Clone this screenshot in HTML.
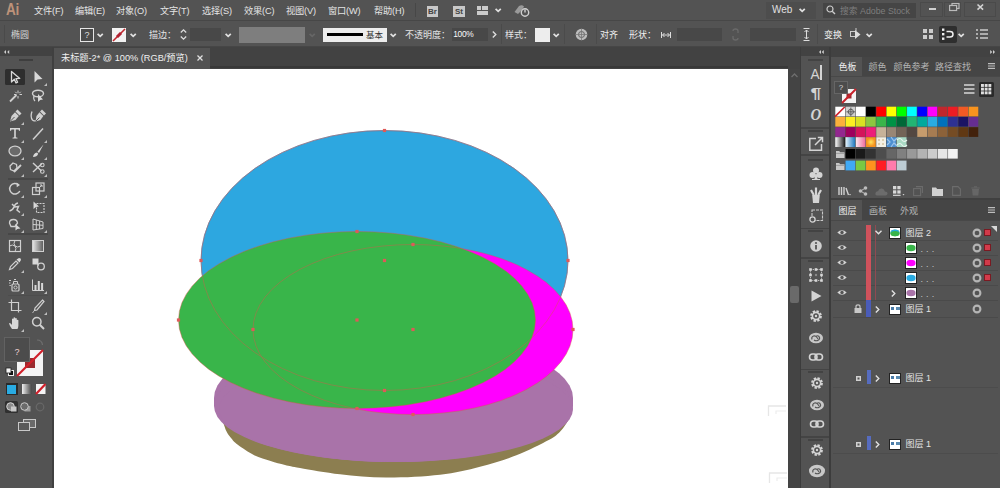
<!DOCTYPE html>
<html lang="zh"><head><meta charset="utf-8"><title>Adobe Illustrator</title><style>
*{margin:0;padding:0;box-sizing:border-box}
html,body{width:1000px;height:488px;overflow:hidden;background:#535353}
body{position:relative;font-family:"Liberation Sans","Noto Sans CJK SC",sans-serif;font-size:9.5px;color:#dcdcdc;line-height:1}
.a{position:absolute}
.t{position:absolute;white-space:nowrap;line-height:12px;height:12px}
svg{position:absolute;overflow:visible}
</style></head><body>
<div class="a" style="left:0px;top:0px;width:1000px;height:20px;background:#535353;"></div>
<div class="a" style="left:0px;top:20px;width:1000px;height:1px;background:#474747;"></div>
<div class="t" style="left:6.4px;top:1.2px;font-weight:bold;font-size:16.5px;line-height:17px;height:17px;color:#bd9279;letter-spacing:-0.3px;transform:scaleX(0.82);transform-origin:0 50%">Ai</div>
<div class="t" style="left:34px;top:4.5px;color:#e4e4e4;font-size:9.2px;letter-spacing:-0.15px">文件(F)</div>
<div class="t" style="left:75px;top:4.5px;color:#e4e4e4;font-size:9.2px;letter-spacing:-0.15px">编辑(E)</div>
<div class="t" style="left:116px;top:4.5px;color:#e4e4e4;font-size:9.2px;letter-spacing:-0.15px">对象(O)</div>
<div class="t" style="left:160px;top:4.5px;color:#e4e4e4;font-size:9.2px;letter-spacing:-0.15px">文字(T)</div>
<div class="t" style="left:202px;top:4.5px;color:#e4e4e4;font-size:9.2px;letter-spacing:-0.15px">选择(S)</div>
<div class="t" style="left:244px;top:4.5px;color:#e4e4e4;font-size:9.2px;letter-spacing:-0.15px">效果(C)</div>
<div class="t" style="left:286px;top:4.5px;color:#e4e4e4;font-size:9.2px;letter-spacing:-0.15px">视图(V)</div>
<div class="t" style="left:328px;top:4.5px;color:#e4e4e4;font-size:9.2px;letter-spacing:-0.15px">窗口(W)</div>
<div class="t" style="left:374px;top:4.5px;color:#e4e4e4;font-size:9.2px;letter-spacing:-0.15px">帮助(H)</div>
<div class="a" style="left:415px;top:3px;width:1px;height:14px;background:#474747;"></div>
<div class="a" style="left:427px;top:5.5px;width:11px;height:11.5px;background:#c8c8c8;"></div>
<div class="t" style="left:428px;top:5.5px;font-size:8px;color:#444;line-height:11px;height:11px;font-weight:bold">Br</div>
<div class="a" style="left:453px;top:5.5px;width:11.5px;height:11.5px;background:#c8c8c8;"></div>
<div class="t" style="left:455px;top:5.5px;font-size:8px;color:#444;line-height:11px;height:11px;font-weight:bold">St</div>
<svg style="left:477px;top:6px;" width="11" height="9" viewBox="0 0 11 9"><rect x="0" y="0" width="4" height="4" fill="#ccc"/><rect x="5" y="0" width="6" height="4" fill="#ccc"/><rect x="0" y="5" width="11" height="4" fill="#ccc"/></svg>
<svg style="left:495.3px;top:8.2px;" width="6.4" height="4.6" viewBox="0 0 6.4 4.6"><path d="M0.6 0.8 L3.2 3.4 L5.8 0.8" fill="none" stroke="#e0e0e0" stroke-width="1.7"/></svg>
<svg style="left:513px;top:4px;" width="17" height="14" viewBox="0 0 17 14"><path d="M1.5 8 L6 2 Q9 0.5 11 2.5 L9 6 L5 10 Z" fill="#9a9a9a"/><circle cx="12" cy="8.5" r="3.7" fill="#535353" stroke="#d0d0d0" stroke-width="1.4"/><path d="M12 5.5 V8.5" stroke="#d0d0d0" stroke-width="1.4"/></svg>
<div class="a" style="left:766px;top:2px;width:50px;height:17px;background:#4d4d4d;"></div>
<div class="t" style="left:772px;top:4px;font-size:10px;color:#e0e0e0">Web</div>
<svg style="left:799.3px;top:7.7px;" width="6.4" height="4.6" viewBox="0 0 6.4 4.6"><path d="M0.6 0.8 L3.2 3.4 L5.8 0.8" fill="none" stroke="#e0e0e0" stroke-width="1.7"/></svg>
<div class="a" style="left:823px;top:3px;width:93px;height:15px;background:#454545;"></div>
<svg style="left:826px;top:5px;" width="11" height="10" viewBox="0 0 11 10"><circle cx="4" cy="4" r="3" fill="none" stroke="#ccc" stroke-width="1.2"/><path d="M6.2 6.2 L9 9" stroke="#ccc" stroke-width="1.4"/></svg>
<div class="t" style="left:840px;top:4.5px;color:#7e7e7e;font-size:8.8px">搜索 Adobe Stock</div>
<div class="a" style="left:920px;top:1.5px;width:23px;height:15px;background:transparent;border:1px solid rgba(0,0,0,0.10)"></div>
<div class="a" style="left:944px;top:1.5px;width:17px;height:15px;background:transparent;border:1px solid rgba(0,0,0,0.10)"></div>
<div class="a" style="left:964px;top:1.5px;width:32px;height:15px;background:transparent;border:1px solid rgba(0,0,0,0.10)"></div>
<div class="a" style="left:928.5px;top:8.3px;width:7.5px;height:1.8px;background:#d0d0d0;"></div>
<svg style="left:948.5px;top:3.3px;" width="11" height="8" viewBox="0 0 11 8"><rect x="3" y="0.5" width="7" height="5" fill="none" stroke="#bbb" stroke-width="1.2"/><rect x="0.6" y="2.5" width="7" height="5" fill="#535353" stroke="#bbb" stroke-width="1.2"/></svg>
<svg style="left:977px;top:3.8px;" width="6.6" height="6.2" viewBox="0 0 6.6 6.2"><path d="M0.5 0.5 L6.1 5.7 M6.1 0.5 L0.5 5.7" stroke="#d4d4d4" stroke-width="1.6"/></svg>
<div class="a" style="left:0px;top:21px;width:1000px;height:25px;background:#535353;"></div>
<div class="a" style="left:0px;top:46px;width:1000px;height:1px;background:#464646;"></div>
<div class="a" style="left:4px;top:25px;width:1px;height:18px;background:#4a4a4a;"></div>
<div class="t" style="left:11px;top:29px;color:#d6d6d6;font-size:9px">椭圆</div>
<div class="a" style="left:80px;top:27.8px;width:14px;height:14px;background:#4a4a4a;border:1.8px solid #e6e6e6"></div>
<div class="t" style="left:80px;top:29px;width:14px;text-align:center;font-size:9px;color:#ddd">?</div>
<svg style="left:97.3px;top:32.7px;" width="6.4" height="4.6" viewBox="0 0 6.4 4.6"><path d="M0.6 0.8 L3.2 3.4 L5.8 0.8" fill="none" stroke="#e0e0e0" stroke-width="1.7"/></svg>
<svg style="left:112px;top:28px;" width="14" height="14" viewBox="0 0 14 14"><rect width="14" height="14" fill="#f2f2f2"/><path d="M1 13 L13 1" stroke="#c1272d" stroke-width="1.6"/><path d="M5 9 L9 5" stroke="#b02030" stroke-width="3"/></svg>
<svg style="left:130.3px;top:32.7px;" width="6.4" height="4.6" viewBox="0 0 6.4 4.6"><path d="M0.6 0.8 L3.2 3.4 L5.8 0.8" fill="none" stroke="#e0e0e0" stroke-width="1.7"/></svg>
<div class="t" style="left:149px;top:29px;color:#e4e4e4;font-size:9px">描边：</div>
<svg style="left:180px;top:28px;" width="7" height="13" viewBox="0 0 7 13"><path d="M0.8 4.5 L3.5 1.8 L6.2 4.5 M0.8 8.5 L3.5 11.2 L6.2 8.5" fill="none" stroke="#ddd" stroke-width="1.3"/></svg>
<div class="a" style="left:190px;top:27.5px;width:31px;height:13.5px;background:#484848;"></div>
<svg style="left:225.3px;top:32.7px;" width="6.4" height="4.6" viewBox="0 0 6.4 4.6"><path d="M0.6 0.8 L3.2 3.4 L5.8 0.8" fill="none" stroke="#e0e0e0" stroke-width="1.7"/></svg>
<div class="a" style="left:239px;top:26.7px;width:66px;height:16px;background:#7e7e7e;"></div>
<svg style="left:309.3px;top:32.7px;" width="6.4" height="4.6" viewBox="0 0 6.4 4.6"><path d="M0.6 0.8 L3.2 3.4 L5.8 0.8" fill="none" stroke="#666" stroke-width="1.7"/></svg>
<div class="a" style="left:323px;top:28px;width:64px;height:13.5px;background:#ededed;"></div>
<div class="a" style="left:327px;top:33.2px;width:35.5px;height:2.8px;background:#000;"></div>
<div class="t" style="left:366px;top:29px;color:#333;font-size:8.5px">基本</div>
<svg style="left:390.1px;top:32.7px;" width="6.4" height="4.6" viewBox="0 0 6.4 4.6"><path d="M0.6 0.8 L3.2 3.4 L5.8 0.8" fill="none" stroke="#e0e0e0" stroke-width="1.7"/></svg>
<div class="t" style="left:405px;top:29px;color:#e4e4e4;font-size:9px">不透明度：</div>
<div class="a" style="left:452px;top:27.5px;width:36px;height:13.5px;background:#484848;"></div>
<div class="t" style="left:453.3px;top:28px;color:#fafafa;font-size:8.4px;letter-spacing:-0.35px">100%</div>
<svg style="left:492px;top:31px;" width="5" height="7" viewBox="0 0 5 7"><path d="M0.8 0.5 L3.8 3.5 L0.8 6.5" fill="none" stroke="#ddd" stroke-width="1.4"/></svg>
<div class="a" style="left:500.5px;top:24px;width:1px;height:20px;background:#4a4a4a;"></div>
<div class="a" style="left:563.5px;top:24px;width:1px;height:20px;background:#4b4b4b;"></div>
<div class="a" style="left:595.5px;top:24px;width:1px;height:20px;background:#4b4b4b;"></div>
<div class="a" style="left:816.5px;top:24px;width:1px;height:20px;background:#4b4b4b;"></div>
<div class="t" style="left:505px;top:29px;color:#e4e4e4;font-size:9px">样式：</div>
<div class="a" style="left:535px;top:27.5px;width:14.5px;height:14px;background:#ededed;"></div>
<svg style="left:553.3px;top:32.7px;" width="6.4" height="4.6" viewBox="0 0 6.4 4.6"><path d="M0.6 0.8 L3.2 3.4 L5.8 0.8" fill="none" stroke="#e0e0e0" stroke-width="1.7"/></svg>
<svg style="left:575px;top:28px;" width="13" height="13" viewBox="0 0 13 13"><circle cx="6.5" cy="6.5" r="5.8" fill="#bdbdbd"/><circle cx="6.5" cy="6.5" r="3" fill="none" stroke="#666" stroke-width="1"/><path d="M0.7 6.5 H12.3 M6.5 0.7 V12.3" stroke="#777" stroke-width="0.8"/></svg>
<div class="t" style="left:600px;top:29px;color:#f0f0f0;font-size:9px">对齐</div>
<div class="t" style="left:629px;top:29px;color:#f0f0f0;font-size:9px">形状：</div>
<svg style="left:661px;top:32px;" width="10" height="6" viewBox="0 0 10 6"><path d="M0.5 0 V6 M9.5 0 V6" stroke="#ddd" stroke-width="1"/><path d="M1.5 3 H8.5" stroke="#ddd" stroke-width="1"/><path d="M3.5 1 L1.5 3 L3.5 5 M6.5 1 L8.5 3 L6.5 5" stroke="#ddd" stroke-width="1" fill="none"/></svg>
<div class="a" style="left:677px;top:27.5px;width:45px;height:13.5px;background:#484848;"></div>
<svg style="left:731px;top:28px;" width="9" height="13" viewBox="0 0 9 13"><path d="M2 3 Q2 1 4.5 1 Q7 1 7 3 V5 M2 8 V10 Q2 12 4.5 12 Q7 12 7 10" fill="none" stroke="#6a6a6a" stroke-width="1.3"/></svg>
<div class="a" style="left:750px;top:27.5px;width:46px;height:13.5px;background:#484848;"></div>
<svg style="left:803px;top:28px;" width="7" height="13" viewBox="0 0 7 13"><path d="M0.5 0.5 H6.5 M0.5 12.5 H6.5" stroke="#ddd" stroke-width="1"/><path d="M3.5 2 V11" stroke="#ddd" stroke-width="1"/><path d="M1.5 4 L3.5 2 L5.5 4 M1.5 9 L3.5 11 L5.5 9" stroke="#ddd" stroke-width="1" fill="none"/></svg>
<div class="t" style="left:824px;top:29px;color:#f0f0f0;font-size:9px">变换</div>
<svg style="left:850px;top:28px;" width="11" height="13" viewBox="0 0 11 13"><rect x="0.5" y="3.5" width="5" height="5" fill="none" stroke="#ccc" stroke-width="1"/><path d="M5 2 L10.5 6.5 L5 11 Z" fill="#ddd"/><path d="M6 0 V3" stroke="#ccc" stroke-width="1"/></svg>
<svg style="left:866.3px;top:32.7px;" width="6.4" height="4.6" viewBox="0 0 6.4 4.6"><path d="M0.6 0.8 L3.2 3.4 L5.8 0.8" fill="none" stroke="#e0e0e0" stroke-width="1.7"/></svg>
<svg style="left:923px;top:29px;" width="10" height="10" viewBox="0 0 10 10"><rect x="0" y="0" width="4" height="4" fill="#ccc"/><rect x="6" y="0" width="4" height="4" fill="#ccc"/><rect x="0" y="6" width="4" height="4" fill="#ccc"/><rect x="6" y="6" width="4" height="4" fill="#ccc"/></svg>
<div class="a" style="left:939px;top:26px;width:18px;height:17px;background:#2e2e2e;border-radius:2px"></div>
<svg style="left:942px;top:28px;" width="12" height="13" viewBox="0 0 12 13"><rect x="0" y="0.5" width="2.4" height="2.4" fill="#eee"/><rect x="0" y="5" width="2.4" height="2.4" fill="#eee"/><rect x="0" y="9.5" width="2.4" height="2.4" fill="#eee"/><path d="M4.5 3.5 H8 Q11 3.5 11 6.2 Q11 9 8 9 H4.5" fill="none" stroke="#eee" stroke-width="1.5"/></svg>
<svg style="left:958.3px;top:32.7px;" width="6.4" height="4.6" viewBox="0 0 6.4 4.6"><path d="M0.6 0.8 L3.2 3.4 L5.8 0.8" fill="none" stroke="#e0e0e0" stroke-width="1.7"/></svg>
<svg style="left:976px;top:29px;" width="12" height="10" viewBox="0 0 12 10"><path d="M0 1 H2 M4 1 H12 M0 5 H2 M4 5 H12 M0 9 H2 M4 9 H12" stroke="#ccc" stroke-width="1.3"/></svg>
<div class="a" style="left:0px;top:46.7px;width:1000px;height:22.3px;background:#424242;"></div>
<div class="a" style="left:54px;top:48px;width:156px;height:21px;background:#535353;"></div>
<div class="t" style="left:61px;top:52px;color:#f0f0f0;font-size:9.2px">未标题-2* @ 100% (RGB/预览)</div>
<svg style="left:197px;top:55px;" width="6" height="6" viewBox="0 0 6 6"><path d="M0.5 0.5 L5.5 5.5 M5.5 0.5 L0.5 5.5" stroke="#e0e0e0" stroke-width="1.3"/></svg>
<div class="a" style="left:210px;top:65.8px;width:578px;height:2.7px;background:#383838;"></div>
<div class="a" style="left:54px;top:68.5px;width:734px;height:419.5px;background:#ffffff;"></div>
<svg style="left:0px;top:0px;" width="1000" height="488" viewBox="0 0 1000 488"><defs><clipPath id="cc"><rect x="54" y="68" width="734" height="420"/></clipPath></defs><g clip-path="url(#cc)">
<path d="M223.0 422.0 C223.6 423.5 225.0 428.3 226.3 431.0 C227.6 433.7 229.1 435.7 231.0 438.0 C232.9 440.3 233.9 441.9 237.8 444.8 C241.7 447.7 248.7 452.5 254.2 455.2 C259.7 457.9 265.5 459.4 270.6 461.0 C275.7 462.6 280.1 463.8 285.0 465.0 C289.9 466.2 290.8 466.4 300.0 468.0 C309.2 469.6 325.7 472.7 340.0 474.3 C354.3 475.9 369.3 477.5 386.0 477.6 C402.7 477.7 424.3 476.6 440.0 474.8 C455.7 473.0 467.3 470.1 480.0 466.8 C492.7 463.6 504.9 459.8 516.4 455.3 C527.9 450.8 541.9 443.7 549.2 439.8 C556.5 435.9 557.3 434.3 560.0 431.8 C562.7 429.3 564.0 426.9 565.6 424.6 C567.2 422.3 568.9 419.1 569.5 418.0 L500.0 410.0 L300.0 410.0 Z" fill="#8c7e50"/>
<ellipse cx="393.5" cy="398" rx="179.5" ry="64" fill="#a973a9"/>
<rect x="214" y="398" width="359" height="8" fill="#a973a9"/><ellipse cx="393.5" cy="406" rx="179.5" ry="56" fill="#a973a9"/><ellipse cx="396" cy="409" rx="177" ry="53" fill="#a973a9"/>
<ellipse cx="384.5" cy="260.5" rx="183.5" ry="130" fill="#2da7e0" stroke="#4a8fc0" stroke-width="0.8"/>
<ellipse cx="413" cy="329.5" rx="160" ry="85" fill="#ff00ff"/>
<ellipse cx="357" cy="320" rx="178.5" ry="88.5" fill="#39b54a"/>
<g fill="none" stroke="#d8584a" stroke-width="0.8" opacity="0.55">
<ellipse cx="384.5" cy="260.5" rx="183.5" ry="130"/>
<ellipse cx="413" cy="329.5" rx="160" ry="85"/>
<ellipse cx="357" cy="320" rx="178.5" ry="88.5"/>
</g>
<rect x="382.9" y="128.9" width="3.2" height="3.2" fill="#de5a58"/><rect x="199.4" y="258.9" width="3.2" height="3.2" fill="#de5a58"/><rect x="566.4" y="258.9" width="3.2" height="3.2" fill="#de5a58"/><rect x="382.9" y="258.9" width="3.2" height="3.2" fill="#de5a58"/><rect x="382.9" y="388.9" width="3.2" height="3.2" fill="#de5a58"/><rect x="411.4" y="242.9" width="3.2" height="3.2" fill="#de5a58"/><rect x="251.4" y="327.9" width="3.2" height="3.2" fill="#de5a58"/><rect x="571.4" y="327.9" width="3.2" height="3.2" fill="#de5a58"/><rect x="411.4" y="327.9" width="3.2" height="3.2" fill="#de5a58"/><rect x="411.4" y="412.9" width="3.2" height="3.2" fill="#de5a58"/><rect x="355.4" y="229.9" width="3.2" height="3.2" fill="#de5a58"/><rect x="176.9" y="318.4" width="3.2" height="3.2" fill="#de5a58"/><rect x="355.4" y="318.4" width="3.2" height="3.2" fill="#de5a58"/><rect x="355.4" y="406.9" width="3.2" height="3.2" fill="#de5a58"/></g></svg>
<div class="a" style="left:0px;top:47px;width:52px;height:441px;background:#535353;"></div>
<div class="a" style="left:52px;top:47px;width:2px;height:441px;background:#404040;"></div>
<div class="a" style="left:0px;top:47px;width:52px;height:9px;background:#424242;"></div>
<svg style="left:4px;top:49.7px;" width="5.5" height="4" viewBox="0 0 5.5 4"><path d="M2 0 L0 2 L2 4 Z M5.2 0 L3.2 2 L5.2 4 Z" fill="#d0d0d0"/></svg>
<div class="a" style="left:18.5px;top:59px;width:14.5px;height:2px;background:#3e3e3e;"></div>
<div class="a" style="left:5px;top:69px;width:20px;height:15.5px;background:#2e2e2e;border-radius:1.5px"></div>
<svg style="left:7.0px;top:69.0px;" width="16" height="16" viewBox="0 0 16 16"><path d="M4.5 2.5 L4.5 13 L7.3 10.3 L9 14 L10.6 13.2 L9 9.7 L12.8 9.4 Z" fill="none" stroke="#d8d8d8" stroke-width="1.3" stroke-linejoin="round"/></svg>
<svg style="left:30.0px;top:69.0px;" width="16" height="16" viewBox="0 0 16 16"><path d="M4.5 2 L4.5 13.5 L7.5 10.5 L12.5 10 Z" fill="#d8d8d8"/></svg>
<svg style="left:44px;top:83px;" width="3" height="3" viewBox="0 0 3 3"><path d="M3 0 V3 H0 Z" fill="#bdbdbd"/></svg>
<svg style="left:7.0px;top:87.5px;" width="16" height="16" viewBox="0 0 16 16"><path d="M3 13.5 L9.5 7" stroke="#d0d0d0" stroke-width="1.8"/><path d="M11 2.5 V5 M11 8 V10.5 M7 6.5 H9.5 M12.5 6.5 H15 M8.3 3.8 L9.8 5.3 M13.7 3.8 L12.2 5.3" stroke="#d0d0d0" stroke-width="1"/></svg>
<svg style="left:30.0px;top:87.5px;" width="16" height="16" viewBox="0 0 16 16"><ellipse cx="8" cy="5.5" rx="5.5" ry="3.3" fill="none" stroke="#d0d0d0" stroke-width="1.4"/><path d="M4 8 Q3 11 5 13" fill="none" stroke="#d0d0d0" stroke-width="1.2"/><path d="M8 6 L8 14 L10.2 12 L13 11.5 Z" fill="#d8d8d8"/></svg>
<svg style="left:7.0px;top:108.0px;" width="16" height="16" viewBox="0 0 16 16"><path d="M10.5 1.5 L14.5 5.5 L12.5 7.5 L8.5 3.5 Z" fill="#d0d0d0"/><path d="M8 4.2 L11.8 8 L8.5 12 L3 13.5 L4.5 8 Z" fill="#d0d0d0"/><path d="M3.5 13 L7.5 9" stroke="#555" stroke-width="1"/></svg>
<svg style="left:21px;top:122px;" width="3" height="3" viewBox="0 0 3 3"><path d="M3 0 V3 H0 Z" fill="#bdbdbd"/></svg>
<svg style="left:30.0px;top:108.0px;" width="16" height="16" viewBox="0 0 16 16"><path d="M12 1.5 L16 5.5 L14 7.5 L10 3.5 Z" fill="#d0d0d0"/><path d="M9.5 4.2 L13.3 8 L10.5 12 L5.5 13.5 L6.5 8 Z" fill="#d0d0d0"/><path d="M6 13 L9.5 9.5" stroke="#555" stroke-width="1"/><path d="M2 3.5 Q0 9 2.5 12 Q4 13.5 5.5 12.5" fill="none" stroke="#d0d0d0" stroke-width="1.3"/></svg>
<svg style="left:7.0px;top:124.5px;" width="16" height="16" viewBox="0 0 16 16"><path d="M3 3 H13 V5.8 H12 L11.5 4.4 H8.8 V12.3 L10.5 12.8 V13.5 H5.5 V12.8 L7.2 12.3 V4.4 H4.5 L4 5.8 H3 Z" fill="#d8d8d8"/></svg>
<svg style="left:21px;top:139.5px;" width="3" height="3" viewBox="0 0 3 3"><path d="M3 0 V3 H0 Z" fill="#bdbdbd"/></svg>
<svg style="left:30.0px;top:125.5px;" width="16" height="16" viewBox="0 0 16 16"><path d="M3 13.5 L13 2.5" stroke="#d0d0d0" stroke-width="1.5"/></svg>
<svg style="left:44px;top:139.5px;" width="3" height="3" viewBox="0 0 3 3"><path d="M3 0 V3 H0 Z" fill="#bdbdbd"/></svg>
<svg style="left:7.0px;top:142.5px;" width="16" height="16" viewBox="0 0 16 16"><ellipse cx="8" cy="8" rx="6" ry="4.8" fill="#6a6a6a" stroke="#d0d0d0" stroke-width="1.3"/></svg>
<svg style="left:21px;top:156.5px;" width="3" height="3" viewBox="0 0 3 3"><path d="M3 0 V3 H0 Z" fill="#bdbdbd"/></svg>
<svg style="left:30.0px;top:142.5px;" width="16" height="16" viewBox="0 0 16 16"><path d="M13.5 1.5 L7.5 8.5 L9 10 Z" fill="#d8d8d8"/><path d="M7 9.5 Q3.5 10 3 14 Q7 14 8.2 10.8 Z" fill="#d8d8d8"/></svg>
<svg style="left:44px;top:156.5px;" width="3" height="3" viewBox="0 0 3 3"><path d="M3 0 V3 H0 Z" fill="#bdbdbd"/></svg>
<svg style="left:7.0px;top:160.0px;" width="16" height="16" viewBox="0 0 16 16"><path d="M6 3 L9.5 4.5 L10 8 L7 11 L3.5 9.5 L3 6 Z" fill="none" stroke="#d0d0d0" stroke-width="1.3"/><path d="M7 12 L14 5" stroke="#d0d0d0" stroke-width="1.8"/></svg>
<svg style="left:21px;top:174px;" width="3" height="3" viewBox="0 0 3 3"><path d="M3 0 V3 H0 Z" fill="#bdbdbd"/></svg>
<svg style="left:30.0px;top:160.0px;" width="16" height="16" viewBox="0 0 16 16"><path d="M3 3 L11.5 11 M3 12 L12 3.5" stroke="#d0d0d0" stroke-width="1.4"/><circle cx="12.3" cy="5" r="1.8" fill="none" stroke="#d0d0d0" stroke-width="1.1"/><circle cx="12.3" cy="11.5" r="1.8" fill="none" stroke="#d0d0d0" stroke-width="1.1"/></svg>
<svg style="left:44px;top:174px;" width="3" height="3" viewBox="0 0 3 3"><path d="M3 0 V3 H0 Z" fill="#bdbdbd"/></svg>
<div class="a" style="left:8px;top:177.6px;width:40px;height:2px;background:#474747;"></div>
<svg style="left:7.0px;top:181.0px;" width="16" height="16" viewBox="0 0 16 16"><path d="M12.8 10 A5.3 5.3 0 1 1 11.5 3.8" fill="none" stroke="#d0d0d0" stroke-width="1.5"/><path d="M9.5 1.5 L13 4 L9.8 6.3 Z" fill="#d0d0d0"/></svg>
<svg style="left:21px;top:195px;" width="3" height="3" viewBox="0 0 3 3"><path d="M3 0 V3 H0 Z" fill="#bdbdbd"/></svg>
<svg style="left:30.0px;top:181.0px;" width="16" height="16" viewBox="0 0 16 16"><rect x="2.5" y="6.5" width="7" height="7" fill="none" stroke="#d0d0d0" stroke-width="1.2"/><rect x="6" y="2" width="8" height="8" fill="none" stroke="#d0d0d0" stroke-width="1.2"/><path d="M9 7 L12 4 M10 4 H12 V6" stroke="#d0d0d0" stroke-width="1" fill="none"/></svg>
<svg style="left:44px;top:195px;" width="3" height="3" viewBox="0 0 3 3"><path d="M3 0 V3 H0 Z" fill="#bdbdbd"/></svg>
<svg style="left:7.0px;top:198.5px;" width="16" height="16" viewBox="0 0 16 16"><path d="M2.5 12 Q6 11 7 8 Q8 4.5 11 4 M5 5 L8 8 L11.5 7.5 L10 11 L13 13.5" fill="none" stroke="#d0d0d0" stroke-width="1.5"/></svg>
<svg style="left:21px;top:212.5px;" width="3" height="3" viewBox="0 0 3 3"><path d="M3 0 V3 H0 Z" fill="#bdbdbd"/></svg>
<svg style="left:30.0px;top:198.5px;" width="16" height="16" viewBox="0 0 16 16"><path d="M3.5 2.5 L3.5 10 L6 8 L9 7.5 Z" fill="#d8d8d8"/><rect x="6.5" y="4.5" width="7.5" height="9" fill="none" stroke="#d0d0d0" stroke-width="1.1" stroke-dasharray="2 1"/></svg>
<svg style="left:7.0px;top:216.0px;" width="16" height="16" viewBox="0 0 16 16"><path d="M2.5 7 Q2.5 3.5 6.5 3.5 Q10 3.5 10.5 7 L8 10.5 H4 Z" fill="none" stroke="#d0d0d0" stroke-width="1.3"/><path d="M8.5 8 L8.5 14.5 L10.3 13 L13.5 12.5 Z" fill="#d8d8d8"/></svg>
<svg style="left:21px;top:230px;" width="3" height="3" viewBox="0 0 3 3"><path d="M3 0 V3 H0 Z" fill="#bdbdbd"/></svg>
<svg style="left:30.0px;top:216.0px;" width="16" height="16" viewBox="0 0 16 16"><path d="M3 3 L13 6 V12.5 L3 14 Z M6.3 4 V13.5 M9.6 5 V13 M3 8.5 L13 9.3" fill="none" stroke="#d0d0d0" stroke-width="1"/></svg>
<svg style="left:44px;top:230px;" width="3" height="3" viewBox="0 0 3 3"><path d="M3 0 V3 H0 Z" fill="#bdbdbd"/></svg>
<div class="a" style="left:8px;top:233.4px;width:40px;height:2px;background:#474747;"></div>
<svg style="left:7.0px;top:237.5px;" width="16" height="16" viewBox="0 0 16 16"><rect x="2.5" y="2.5" width="11" height="11" fill="none" stroke="#d0d0d0" stroke-width="1.2"/><path d="M2.5 8 Q5.5 6 8 8 T13.5 8 M8 2.5 Q6 5.5 8 8 T8 13.5" fill="none" stroke="#d0d0d0" stroke-width="1"/></svg>
<svg style="left:32px;top:239.5px;" width="12" height="12" viewBox="0 0 12 12"><defs><linearGradient id="tg" x1="0" x2="1"><stop offset="0" stop-color="#e8e8e8"/><stop offset="1" stop-color="#5a5a5a"/></linearGradient></defs><rect x="0.5" y="0.5" width="11" height="11" fill="url(#tg)" stroke="#d0d0d0" stroke-width="1"/></svg>
<svg style="left:7.0px;top:256.0px;" width="16" height="16" viewBox="0 0 16 16"><path d="M2.5 13.5 L3.5 10.5 L9 5 L11 7 L5.5 12.5 Z" fill="none" stroke="#d0d0d0" stroke-width="1.2"/><path d="M9.5 3.5 L12.5 6.5 L14 4 Q14.3 2 12 2 Z" fill="#d8d8d8"/></svg>
<svg style="left:21px;top:270px;" width="3" height="3" viewBox="0 0 3 3"><path d="M3 0 V3 H0 Z" fill="#bdbdbd"/></svg>
<svg style="left:30.0px;top:256.0px;" width="16" height="16" viewBox="0 0 16 16"><rect x="2.5" y="2.5" width="6" height="6" fill="#d8d8d8"/><circle cx="11" cy="10.5" r="3.3" fill="none" stroke="#d0d0d0" stroke-width="1.3"/><path d="M6 7 L9 9.5" stroke="#d0d0d0" stroke-width="1"/></svg>
<svg style="left:7.0px;top:276.7px;" width="16" height="16" viewBox="0 0 16 16"><rect x="5" y="7" width="7" height="7" rx="1" fill="none" stroke="#d0d0d0" stroke-width="1.2"/><circle cx="8.5" cy="10.5" r="1.6" fill="none" stroke="#d0d0d0" stroke-width="1"/><path d="M6.5 7 V4.5 H10.5 V7 M2 3.5 H4 M2 6 H3.5 M2.5 8.5 H3.8 M7 2.5 H9" stroke="#d0d0d0" stroke-width="1" fill="none"/></svg>
<svg style="left:21px;top:290.7px;" width="3" height="3" viewBox="0 0 3 3"><path d="M3 0 V3 H0 Z" fill="#bdbdbd"/></svg>
<svg style="left:30.0px;top:276.7px;" width="16" height="16" viewBox="0 0 16 16"><path d="M2.5 2.5 V13.5 H14" fill="none" stroke="#d0d0d0" stroke-width="1"/><rect x="4.5" y="8" width="2" height="5.5" fill="#d8d8d8"/><rect x="7.8" y="4" width="2" height="9.5" fill="#d8d8d8"/><rect x="11.1" y="6" width="2" height="7.5" fill="#d8d8d8"/></svg>
<svg style="left:44px;top:290.7px;" width="3" height="3" viewBox="0 0 3 3"><path d="M3 0 V3 H0 Z" fill="#bdbdbd"/></svg>
<div class="a" style="left:8px;top:295px;width:40px;height:1px;background:#4d4d4d;"></div>
<svg style="left:7.0px;top:298.0px;" width="16" height="16" viewBox="0 0 16 16"><path d="M4.5 1.5 V12.5 H14.5 M1.5 4.5 H11.5 V14.5" fill="none" stroke="#d0d0d0" stroke-width="1.2"/></svg>
<svg style="left:30.0px;top:298.0px;" width="16" height="16" viewBox="0 0 16 16"><path d="M12.5 2 L14 3.5 L7 12 L4.5 12.5 L5 10 Z" fill="none" stroke="#d0d0d0" stroke-width="1.2"/><path d="M4 13.5 L2.5 14.5" stroke="#d0d0d0" stroke-width="1"/></svg>
<svg style="left:44px;top:312px;" width="3" height="3" viewBox="0 0 3 3"><path d="M3 0 V3 H0 Z" fill="#bdbdbd"/></svg>
<svg style="left:7.0px;top:315.0px;" width="16" height="16" viewBox="0 0 16 16"><path d="M5 14 Q2.5 10.5 2 8.5 Q2.5 7.5 4 8.8 L5 10 V4 Q5.8 3 6.5 4 V2.8 Q7.4 1.8 8.2 2.8 V3.5 Q9 2.6 9.8 3.6 V5 Q10.7 4.2 11.4 5.2 V10.5 Q11.3 12.5 10.5 14 Z" fill="#d8d8d8"/></svg>
<svg style="left:21px;top:329px;" width="3" height="3" viewBox="0 0 3 3"><path d="M3 0 V3 H0 Z" fill="#bdbdbd"/></svg>
<svg style="left:30.0px;top:315.0px;" width="16" height="16" viewBox="0 0 16 16"><circle cx="6.8" cy="6.8" r="4.2" fill="none" stroke="#d0d0d0" stroke-width="1.5"/><path d="M9.8 9.8 L14 14" stroke="#d0d0d0" stroke-width="2"/></svg>
<svg style="left:17px;top:350px;" width="26" height="26" viewBox="0 0 26 26"><rect x="0" y="0" width="26" height="26" fill="#f4f4f4"/><rect x="8" y="8" width="10" height="10" fill="#9a2a2e"/><path d="M0 26 L26 0" stroke="#d01f2a" stroke-width="2.2"/></svg>
<div class="a" style="left:4px;top:337px;width:25.5px;height:25px;background:#4c4c4c;border:1px solid #626262"></div>
<div class="t" style="left:4px;top:345.5px;width:26px;text-align:center;font-size:9px;color:#ecd0d0">?</div>
<svg style="left:36px;top:339px;" width="8" height="7" viewBox="0 0 8 7"><path d="M1 1 Q6 1 6.5 6" fill="none" stroke="#6f6f6f" stroke-width="1.2"/></svg>
<svg style="left:6px;top:368px;" width="8" height="8" viewBox="0 0 8 8"><rect x="2.5" y="2.5" width="5" height="5" fill="#111" stroke="#eee" stroke-width="1"/><rect x="0" y="0" width="5" height="5" fill="#f4f4f4" stroke="#222" stroke-width="0.8"/></svg>
<div class="a" style="left:5.5px;top:383px;width:12px;height:12px;background:#2a2a2a;"></div>
<div class="a" style="left:7px;top:384.5px;width:9px;height:9px;background:#29abe2;"></div>
<svg style="left:21.5px;top:384px;" width="9.5" height="10" viewBox="0 0 9.5 10"><defs><linearGradient id="tg2" x1="0" x2="1"><stop offset="0" stop-color="#f0f0f0"/><stop offset="1" stop-color="#4a4a4a"/></linearGradient></defs><rect width="9.5" height="10" fill="url(#tg2)"/></svg>
<svg style="left:35.5px;top:384px;" width="9.5" height="10" viewBox="0 0 9.5 10"><rect width="9.5" height="10" fill="#f4f4f4"/><path d="M0 10 L9.5 0" stroke="#d01f2a" stroke-width="2.2"/></svg>
<div class="a" style="left:5px;top:400.5px;width:13px;height:12.5px;background:#303030;border-radius:1.5px"></div>
<svg style="left:6px;top:402px;" width="11" height="10" viewBox="0 0 11 10"><circle cx="4.5" cy="4.5" r="3.8" fill="#8a8a8a" stroke="#d8d8d8" stroke-width="1"/><rect x="5" y="4.5" width="5.5" height="5" fill="#c8c8c8"/></svg>
<svg style="left:20px;top:402px;" width="11" height="10" viewBox="0 0 11 10"><rect x="4.5" y="4" width="6" height="5.5" fill="#9a9a9a"/><circle cx="4.5" cy="4.5" r="3.8" fill="#6a6a6a" stroke="#c8c8c8" stroke-width="1"/></svg>
<svg style="left:35px;top:402px;" width="11" height="10" viewBox="0 0 11 10"><circle cx="5" cy="5" r="3.8" fill="none" stroke="#686868" stroke-width="1.2"/></svg>
<svg style="left:18px;top:419px;" width="18" height="12" viewBox="0 0 18 12"><rect x="5.5" y="0.5" width="12" height="8" fill="#6a6a6a" stroke="#c8c8c8" stroke-width="1"/><rect x="0.5" y="3.5" width="11" height="8" fill="#5a5a5a" stroke="#c8c8c8" stroke-width="1"/></svg>
<div class="a" style="left:788px;top:68.5px;width:11.5px;height:419.5px;background:#444444;"></div>
<svg style="left:790.5px;top:73px;" width="7" height="5" viewBox="0 0 7 5"><path d="M0.5 4 L3.5 1 L6.5 4" fill="none" stroke="#6e6e6e" stroke-width="1.3"/></svg>
<div class="a" style="left:789.5px;top:286px;width:9px;height:17px;background:#6a6a6a;border-radius:2px"></div>
<div class="a" style="left:799.5px;top:47px;width:1.5px;height:441px;background:#3c3c3c;"></div>
<div class="a" style="left:801px;top:47px;width:28px;height:441px;background:#535353;"></div>
<div class="a" style="left:801px;top:47px;width:28px;height:9px;background:#424242;"></div>
<svg style="left:819.3px;top:49.7px;" width="5" height="4" viewBox="0 0 5 4"><path d="M2 0 L0 2 L2 4 Z M4.8 0 L2.8 2 L4.8 4 Z" fill="#d0d0d0"/></svg>
<div class="a" style="left:829px;top:47px;width:2px;height:441px;background:#3c3c3c;"></div>
<div class="a" style="left:808.2px;top:58.8px;width:14.5px;height:2px;background:#434343;"></div>
<div class="t" style="left:808.5px;top:65.5px;width:12px;text-align:center;font-size:15.5px;line-height:15px;height:15px;color:#d4d4d4;transform:scaleX(0.88);transform-origin:50% 50%">A</div>
<div class="a" style="left:820.3px;top:64.5px;width:1.5px;height:15px;background:#d4d4d4;"></div>
<div class="t" style="left:807.8px;top:85px;width:16px;text-align:center;font-size:15.5px;line-height:15px;height:15px;color:#d4d4d4;font-weight:bold;transform:scaleX(1.25);transform-origin:50% 50%">¶</div>
<div class="t" style="left:807.5px;top:105.5px;width:16px;text-align:center;font-size:17.5px;line-height:17px;height:17px;color:#d4d4d4;font-style:italic;font-family:'Liberation Serif',serif;font-weight:bold;transform:scaleX(0.85);transform-origin:50% 50%">O</div>
<div class="a" style="left:801px;top:127px;width:28px;height:1.5px;background:#444444;"></div>
<div class="a" style="left:808.2px;top:129.8px;width:14.5px;height:2px;background:#434343;"></div>
<svg style="left:807.7px;top:136.3px;" width="16" height="16" viewBox="0 0 16 16"><path d="M8 2.5 H1.8 V14.2 H13.5 V8" fill="none" stroke="#d4d4d4" stroke-width="1.5"/><path d="M7 9 L14 2 M9.8 1.5 H14.5 V6.2" fill="none" stroke="#d4d4d4" stroke-width="1.5"/></svg>
<div class="a" style="left:801px;top:154px;width:28px;height:1.5px;background:#444444;"></div>
<div class="a" style="left:808.2px;top:159.3px;width:14.5px;height:2px;background:#434343;"></div>
<svg style="left:807.7px;top:166.0px;" width="16" height="16" viewBox="0 0 16 16"><circle cx="8" cy="4.5" r="3" fill="#d4d4d4"/><circle cx="4.5" cy="9" r="3" fill="#d4d4d4"/><circle cx="11.5" cy="9" r="3" fill="#d4d4d4"/><path d="M7.3 8 H8.7 L9.5 13 H12 V14 H4 V13 H6.5 Z" fill="#d4d4d4"/></svg>
<svg style="left:807.7px;top:186.5px;" width="16" height="16" viewBox="0 0 16 16"><path d="M4.2 8 H11.8 L11 16 H5 Z" fill="#d4d4d4"/><path d="M8 0.5 V8 M3 3 L5.8 8 M13 3 L10.2 8" stroke="#d4d4d4" stroke-width="2.2"/></svg>
<svg style="left:807.7px;top:207.5px;" width="16" height="16" viewBox="0 0 16 16"><rect x="4" y="2" width="10.5" height="10.5" fill="none" stroke="#c8c8c8" stroke-width="1.1" stroke-dasharray="3 1"/><circle cx="4.5" cy="11.5" r="2.6" fill="#535353" stroke="#d4d4d4" stroke-width="1.3"/></svg>
<div class="a" style="left:801px;top:227.5px;width:28px;height:1.5px;background:#444444;"></div>
<div class="a" style="left:808.2px;top:230.3px;width:14.5px;height:2px;background:#434343;"></div>
<svg style="left:807.7px;top:237.5px;" width="16" height="16" viewBox="0 0 16 16"><circle cx="8" cy="8" r="5.8" fill="#d0d0d0"/><rect x="7.1" y="7" width="1.8" height="4.5" fill="#555"/><circle cx="8" cy="5" r="1.1" fill="#555"/></svg>
<div class="a" style="left:801px;top:257px;width:28px;height:1.5px;background:#444444;"></div>
<div class="a" style="left:808.2px;top:259.8px;width:14.5px;height:2px;background:#434343;"></div>
<svg style="left:807.7px;top:267.3px;" width="16" height="16" viewBox="0 0 16 16"><rect x="2.5" y="2.5" width="11" height="11" fill="none" stroke="#c8c8c8" stroke-width="1" stroke-dasharray="1.2 1"/><rect x="1.2" y="1.2" width="2.6" height="2.6" fill="#d8d8d8"/><rect x="1.2" y="6.7" width="2.6" height="2.6" fill="#d8d8d8"/><rect x="1.2" y="12.2" width="2.6" height="2.6" fill="#d8d8d8"/><rect x="6.7" y="1.2" width="2.6" height="2.6" fill="#d8d8d8"/><rect x="6.7" y="12.2" width="2.6" height="2.6" fill="#d8d8d8"/><rect x="12.2" y="1.2" width="2.6" height="2.6" fill="#d8d8d8"/><rect x="12.2" y="6.7" width="2.6" height="2.6" fill="#d8d8d8"/><rect x="12.2" y="12.2" width="2.6" height="2.6" fill="#d8d8d8"/><circle cx="8" cy="8" r="1.2" fill="#8a8a8a"/></svg>
<svg style="left:807.7px;top:288.0px;" width="16" height="16" viewBox="0 0 16 16"><path d="M3.5 2.5 L13.5 8 L3.5 13.5 Z" fill="#d4d4d4"/></svg>
<svg style="left:807.7px;top:308.0px;" width="16" height="16" viewBox="0 0 16 16"><circle cx="8" cy="8" r="4.6" fill="none" stroke="#d4d4d4" stroke-width="2.6" stroke-dasharray="2.2 1.4"/><circle cx="8" cy="8" r="3.6" fill="none" stroke="#d4d4d4" stroke-width="1.6"/><circle cx="8" cy="8" r="1.2" fill="#d4d4d4"/></svg>
<svg style="left:807.7px;top:329.5px;" width="16" height="16" viewBox="0 0 16 16"><ellipse cx="8" cy="8" rx="7" ry="5.2" fill="#c8c8c8"/><path d="M4 9.5 Q3 7 5.5 6 Q7.5 5.5 9 7.5 L10 9 M6 10 Q8 11.5 10.5 10 Q12.5 8.5 11 6.5 Q9.5 5 8 6.5" fill="none" stroke="#555" stroke-width="1.1"/></svg>
<svg style="left:807.7px;top:349.0px;" width="16" height="16" viewBox="0 0 16 16"><rect x="1.5" y="5" width="7.5" height="6" rx="3" fill="none" stroke="#d4d4d4" stroke-width="1.6"/><rect x="7" y="5" width="7.5" height="6" rx="3" fill="none" stroke="#d4d4d4" stroke-width="1.6"/></svg>
<div class="a" style="left:801px;top:368.5px;width:28px;height:1.5px;background:#444444;"></div>
<div class="a" style="left:808.2px;top:371.3px;width:14.5px;height:2px;background:#434343;"></div>
<svg style="left:808.5px;top:375.0px;" width="16" height="16" viewBox="0 0 16 16"><circle cx="8" cy="8" r="4.6" fill="none" stroke="#d4d4d4" stroke-width="2.6" stroke-dasharray="2.2 1.4"/><circle cx="8" cy="8" r="3.6" fill="none" stroke="#d4d4d4" stroke-width="1.6"/><circle cx="8" cy="8" r="1.2" fill="#d4d4d4"/></svg>
<svg style="left:808.5px;top:396.5px;" width="16" height="16" viewBox="0 0 16 16"><ellipse cx="8" cy="8" rx="7" ry="5.2" fill="#c8c8c8"/><path d="M4 9.5 Q3 7 5.5 6 Q7.5 5.5 9 7.5 L10 9 M6 10 Q8 11.5 10.5 10 Q12.5 8.5 11 6.5 Q9.5 5 8 6.5" fill="none" stroke="#555" stroke-width="1.1"/></svg>
<svg style="left:808.8000000000001px;top:416.3px;" width="16" height="16" viewBox="0 0 16 16"><rect x="1.5" y="5" width="7.5" height="6" rx="3" fill="none" stroke="#d4d4d4" stroke-width="1.6"/><rect x="7" y="5" width="7.5" height="6" rx="3" fill="none" stroke="#d4d4d4" stroke-width="1.6"/></svg>
<div class="a" style="left:801px;top:436px;width:28px;height:1.5px;background:#444444;"></div>
<div class="a" style="left:808.2px;top:439.3px;width:14.5px;height:2px;background:#434343;"></div>
<svg style="left:809.2px;top:442.0px;" width="16" height="16" viewBox="0 0 16 16"><circle cx="8" cy="8" r="4.6" fill="none" stroke="#d4d4d4" stroke-width="2.6" stroke-dasharray="2.2 1.4"/><circle cx="8" cy="8" r="3.6" fill="none" stroke="#d4d4d4" stroke-width="1.6"/><circle cx="8" cy="8" r="1.2" fill="#d4d4d4"/></svg>
<svg style="left:809.2px;top:463.3px;" width="16" height="16" viewBox="0 0 16 16"><ellipse cx="8" cy="8" rx="8" ry="6.2" fill="#c8c8c8"/><path d="M4 9.5 Q3 7 5.5 6 Q7.5 5.5 9 7.5 L10 9 M6 10 Q8 11.5 10.5 10 Q12.5 8.5 11 6.5 Q9.5 5 8 6.5" fill="none" stroke="#555" stroke-width="1.1"/></svg>
<div class="a" style="left:831px;top:47px;width:169px;height:441px;background:#535353;"></div>
<div class="a" style="left:831px;top:47px;width:169px;height:9.5px;background:#424242;"></div>
<svg style="left:989.5px;top:49.7px;" width="5" height="4" viewBox="0 0 5 4"><path d="M0.2 0 L2.2 2 L0.2 4 Z M3 0 L5 2 L3 4 Z" fill="#d0d0d0"/></svg>
<div class="a" style="left:831px;top:56.5px;width:169px;height:19px;background:#454545;"></div>
<div class="a" style="left:831px;top:56.5px;width:30.5px;height:19.5px;background:#535353;"></div>
<div class="a" style="left:831px;top:75.5px;width:169px;height:1px;background:#484848;"></div>
<div class="a" style="left:831px;top:56.5px;width:30.5px;height:1px;background:#535353;"></div>
<div class="t" style="left:838.5px;top:61px;color:#f0f0f0;font-size:9px">色板</div>
<div class="t" style="left:868.5px;top:61px;color:#b4b4b4;font-size:9px">颜色</div>
<div class="t" style="left:893.5px;top:61px;color:#b4b4b4;font-size:9px">颜色参考</div>
<div class="t" style="left:935px;top:61px;color:#b4b4b4;font-size:9px">路径查找</div>
<svg style="left:988px;top:63px;" width="7" height="6" viewBox="0 0 7 6"><path d="M0 0.6 H7 M0 3 H7 M0 5.4 H7" stroke="#bdbdbd" stroke-width="1.1"/></svg>
<svg style="left:842px;top:88.5px;" width="14" height="14" viewBox="0 0 14 14"><rect width="14" height="14" fill="#f4f4f4"/><rect x="4.5" y="4.5" width="5" height="5" fill="#9a2a2e"/><path d="M0 14 L14 0" stroke="#c8202a" stroke-width="2"/></svg>
<div class="a" style="left:833.8px;top:80.8px;width:14.6px;height:13.4px;background:#4c4c4c;border:1px solid #666"></div>
<div class="t" style="left:833.8px;top:82.3px;width:14.6px;text-align:center;font-size:8px;color:#ddd;line-height:11px;height:11px">?</div>
<svg style="left:963.8px;top:84.3px;" width="10.5" height="10" viewBox="0 0 10.5 10"><path d="M0 1 H10.5 M0 5 H10.5 M0 9 H10.5" stroke="#d8d8d8" stroke-width="1.6"/></svg>
<div class="a" style="left:978.5px;top:81.5px;width:15.5px;height:15.5px;background:#2a2a2a;border-radius:1.5px"></div>
<svg style="left:981px;top:84px;" width="10.5" height="10.5" viewBox="0 0 10.5 10.5"><rect x="0.0" y="0.0" width="2.9" height="2.9" fill="#e0e0e0"/><rect x="0.0" y="3.7" width="2.9" height="2.9" fill="#e0e0e0"/><rect x="0.0" y="7.4" width="2.9" height="2.9" fill="#e0e0e0"/><rect x="3.7" y="0.0" width="2.9" height="2.9" fill="#e0e0e0"/><rect x="3.7" y="3.7" width="2.9" height="2.9" fill="#e0e0e0"/><rect x="3.7" y="7.4" width="2.9" height="2.9" fill="#e0e0e0"/><rect x="7.4" y="0.0" width="2.9" height="2.9" fill="#e0e0e0"/><rect x="7.4" y="3.7" width="2.9" height="2.9" fill="#e0e0e0"/><rect x="7.4" y="7.4" width="2.9" height="2.9" fill="#e0e0e0"/></svg>
<svg style="left:0px;top:0px;" width="1000" height="488" viewBox="0 0 1000 488"><rect x="835.3" y="106.7" width="9.7" height="9.7" fill="#ffffff"/><rect x="845.55" y="106.7" width="9.7" height="9.7" fill="#d0d0d0"/><rect x="855.8" y="106.7" width="9.7" height="9.7" fill="#ffffff"/><rect x="866.05" y="106.7" width="9.7" height="9.7" fill="#000000"/><rect x="876.3" y="106.7" width="9.7" height="9.7" fill="#ff0000"/><rect x="886.55" y="106.7" width="9.7" height="9.7" fill="#ffff00"/><rect x="896.8" y="106.7" width="9.7" height="9.7" fill="#00ff00"/><rect x="907.05" y="106.7" width="9.7" height="9.7" fill="#00ffff"/><rect x="917.3" y="106.7" width="9.7" height="9.7" fill="#0000ff"/><rect x="927.55" y="106.7" width="9.7" height="9.7" fill="#ff00ff"/><rect x="937.8" y="106.7" width="9.7" height="9.7" fill="#c1272d"/><rect x="948.05" y="106.7" width="9.7" height="9.7" fill="#ed1c24"/><rect x="958.3" y="106.7" width="9.7" height="9.7" fill="#f15a24"/><rect x="968.55" y="106.7" width="9.7" height="9.7" fill="#f7931e"/><rect x="835.3" y="116.9" width="9.7" height="9.7" fill="#fbb03b"/><rect x="845.55" y="116.9" width="9.7" height="9.7" fill="#fcee21"/><rect x="855.8" y="116.9" width="9.7" height="9.7" fill="#d9e021"/><rect x="866.05" y="116.9" width="9.7" height="9.7" fill="#8cc63f"/><rect x="876.3" y="116.9" width="9.7" height="9.7" fill="#39b54a"/><rect x="886.55" y="116.9" width="9.7" height="9.7" fill="#009245"/><rect x="896.8" y="116.9" width="9.7" height="9.7" fill="#006837"/><rect x="907.05" y="116.9" width="9.7" height="9.7" fill="#22b573"/><rect x="917.3" y="116.9" width="9.7" height="9.7" fill="#00a99d"/><rect x="927.55" y="116.9" width="9.7" height="9.7" fill="#29abe2"/><rect x="937.8" y="116.9" width="9.7" height="9.7" fill="#0071bc"/><rect x="948.05" y="116.9" width="9.7" height="9.7" fill="#2e3192"/><rect x="958.3" y="116.9" width="9.7" height="9.7" fill="#1b1464"/><rect x="968.55" y="116.9" width="9.7" height="9.7" fill="#662d91"/><rect x="835.3" y="127.2" width="9.7" height="9.7" fill="#93278f"/><rect x="845.55" y="127.2" width="9.7" height="9.7" fill="#9e005d"/><rect x="855.8" y="127.2" width="9.7" height="9.7" fill="#d4145a"/><rect x="866.05" y="127.2" width="9.7" height="9.7" fill="#ed1e79"/><rect x="876.3" y="127.2" width="9.7" height="9.7" fill="#c7b299"/><rect x="886.55" y="127.2" width="9.7" height="9.7" fill="#998675"/><rect x="896.8" y="127.2" width="9.7" height="9.7" fill="#736357"/><rect x="907.05" y="127.2" width="9.7" height="9.7" fill="#534741"/><rect x="917.3" y="127.2" width="9.7" height="9.7" fill="#c69c6d"/><rect x="927.55" y="127.2" width="9.7" height="9.7" fill="#a67c52"/><rect x="937.8" y="127.2" width="9.7" height="9.7" fill="#8c6239"/><rect x="948.05" y="127.2" width="9.7" height="9.7" fill="#754c24"/><rect x="958.3" y="127.2" width="9.7" height="9.7" fill="#603813"/><rect x="968.55" y="127.2" width="9.7" height="9.7" fill="#42210b"/></svg>
<svg style="left:835.3px;top:106.7px;" width="9.7" height="9.7" viewBox="0 0 9.7 9.7"><path d="M0 9.7 L9.7 0" stroke="#d01f2a" stroke-width="1.6"/></svg>
<svg style="left:845.55px;top:106.7px;" width="9.7" height="9.7" viewBox="0 0 9.7 9.7"><circle cx="4.85" cy="4.85" r="2.6" fill="none" stroke="#555" stroke-width="0.9"/><path d="M4.85 0.5 V9.2 M0.5 4.85 H9.2" stroke="#555" stroke-width="0.9"/></svg>
<svg style="left:0px;top:0px;" width="0" height="0" viewBox="0 0 0 0"><defs><linearGradient id="g1"><stop offset="0" stop-color="#ffffff"/><stop offset="1" stop-color="#1a1a1a"/></linearGradient><linearGradient id="g2"><stop offset="0" stop-color="#e6f4fc"/><stop offset="1" stop-color="#1c75bc"/></linearGradient><linearGradient id="g3"><stop offset="0" stop-color="#fde8ee"/><stop offset="1" stop-color="#f06a9b"/></linearGradient><radialGradient id="g4"><stop offset="0" stop-color="#ffe45c"/><stop offset="0.85" stop-color="#f7931e"/></radialGradient></defs></svg>
<svg style="left:0px;top:0px;" width="1000" height="488" viewBox="0 0 1000 488"><rect x="835.3" y="137.2" width="9.7" height="9.8" fill="url(#g1)"/><rect x="845.55" y="137.2" width="9.7" height="9.8" fill="url(#g2)"/><rect x="855.8" y="137.2" width="9.7" height="9.8" fill="url(#g3)"/><rect x="866.05" y="137.2" width="9.7" height="9.8" fill="url(#g4)"/><rect x="876.3" y="137.2" width="9.7" height="9.8" fill="#f3efe3"/><rect x="886.55" y="137.2" width="9.7" height="9.8" fill="#4d8fd0"/><rect x="896.8" y="137.2" width="9.7" height="9.8" fill="#a9d9c4"/></svg>
<svg style="left:886.55px;top:137.2px;" width="10.25" height="10" viewBox="0 0 10.25 10"><path d="M0 2 L3 5 L0 8 M4 0 L7 4 L10 1 M4 10 L7 6 L10 9" fill="none" stroke="#9cc4ea" stroke-width="1.2"/></svg>
<svg style="left:896.8px;top:137.2px;" width="10.25" height="10" viewBox="0 0 10.25 10"><path d="M0 3 Q3 0 5 3 T10 3 M0 8 Q3 5 5 8 T10 8" fill="none" stroke="#e8f4ee" stroke-width="1.2"/></svg>
<svg style="left:876.3px;top:137.2px;" width="10.25" height="10" viewBox="0 0 10.25 10"><path d="M2 2 H4 V4 H2 Z M6 6 H8 V8 H6 Z M6 2 H8 V4 H6Z M2 6 H4 V8 H2 Z" fill="#dccfb0"/></svg>
<svg style="left:836.3px;top:150px;" width="8.5" height="8" viewBox="0 0 8.5 8"><path d="M0 1 H3.2 L4.2 2.2 H8.5 V8 H0 Z" fill="#c9c9c9"/><path d="M0 3.4 H8.5" stroke="#8a8a8a" stroke-width="0.7"/></svg>
<svg style="left:836.3px;top:161.6px;" width="8.5" height="8" viewBox="0 0 8.5 8"><path d="M0 1 H3.2 L4.2 2.2 H8.5 V8 H0 Z" fill="#c9c9c9"/><path d="M0 3.4 H8.5" stroke="#8a8a8a" stroke-width="0.7"/></svg>
<svg style="left:0px;top:0px;" width="1000" height="488" viewBox="0 0 1000 488"><rect x="845.55" y="149" width="9.7" height="9.6" fill="#000000"/><rect x="855.8" y="149" width="9.7" height="9.6" fill="#1a1a1a"/><rect x="866.05" y="149" width="9.7" height="9.6" fill="#333333"/><rect x="876.3" y="149" width="9.7" height="9.6" fill="#4d4d4d"/><rect x="886.55" y="149" width="9.7" height="9.6" fill="#666666"/><rect x="896.8" y="149" width="9.7" height="9.6" fill="#808080"/><rect x="907.05" y="149" width="9.7" height="9.6" fill="#999999"/><rect x="917.3" y="149" width="9.7" height="9.6" fill="#b3b3b3"/><rect x="927.55" y="149" width="9.7" height="9.6" fill="#cccccc"/><rect x="937.8" y="149" width="9.7" height="9.6" fill="#e6e6e6"/><rect x="948.05" y="149" width="9.7" height="9.6" fill="#f2f2f2"/><rect x="845.55" y="160.6" width="9.7" height="9.8" fill="#3fa9f5"/><rect x="855.8" y="160.6" width="9.7" height="9.8" fill="#7ac943"/><rect x="866.05" y="160.6" width="9.7" height="9.8" fill="#ff931e"/><rect x="876.3" y="160.6" width="9.7" height="9.8" fill="#ff1d25"/><rect x="886.55" y="160.6" width="9.7" height="9.8" fill="#ff7bac"/><rect x="896.8" y="160.6" width="9.7" height="9.8" fill="#bdccd4"/></svg>
<svg style="left:838px;top:186px;" width="12" height="10" viewBox="0 0 12 10"><path d="M1 1 V9 M3.5 1 V9 M6 1 V9 M8 2 L10.5 9" stroke="#d0d0d0" stroke-width="1.4"/><path d="M11 8 H13 L12 9.5 Z" fill="#d0d0d0"/></svg>
<svg style="left:858px;top:186px;" width="10" height="10" viewBox="0 0 10 10"><circle cx="2.5" cy="5" r="1.8" fill="#bdbdbd"/><circle cx="7.5" cy="2" r="1.8" fill="#bdbdbd"/><circle cx="7.5" cy="8" r="1.8" fill="#bdbdbd"/><path d="M2.5 5 L7.5 2 M2.5 5 L7.5 8" stroke="#bdbdbd" stroke-width="1"/></svg>
<svg style="left:875px;top:187px;" width="13" height="9" viewBox="0 0 13 9"><path d="M2 8.5 Q0 8.5 0.5 6 Q1 4 3 4.2 Q4 1 7 1.5 Q9.5 2 9.8 4.5 Q12.5 4.5 12.5 6.8 Q12.3 8.5 10.5 8.5 Z" fill="#6c6c6c"/></svg>
<svg style="left:893px;top:186px;" width="12" height="10" viewBox="0 0 12 10"><rect x="0" y="0" width="3.3" height="3.3" fill="#d8d8d8"/><rect x="4.3" y="0" width="3.3" height="3.3" fill="#d8d8d8"/><rect x="0" y="4.3" width="3.3" height="3.3" fill="#d8d8d8"/><rect x="4.3" y="4.3" width="3.3" height="3.3" fill="#d8d8d8"/><path d="M0 9.3 H7.6" stroke="#d8d8d8" stroke-width="1.2"/><path d="M9.5 8 H11.5 L10.5 9.5 Z" fill="#d0d0d0"/></svg>
<svg style="left:913px;top:186px;" width="10" height="10" viewBox="0 0 10 10"><rect x="0.6" y="2.6" width="7" height="7" fill="none" stroke="#6c6c6c" stroke-width="1.1"/><path d="M3 0.6 H9.4 V7" fill="none" stroke="#6c6c6c" stroke-width="1.1"/></svg>
<svg style="left:932px;top:187px;" width="11" height="9" viewBox="0 0 11 9"><path d="M0 0.5 H4 L5.2 2 H11 V9 H0 Z" fill="#d0d0d0"/></svg>
<svg style="left:952px;top:186px;" width="9" height="10" viewBox="0 0 9 10"><path d="M0.6 0.6 H6 L8.4 3 V9.4 H0.6 Z" fill="none" stroke="#6c6c6c" stroke-width="1.1"/></svg>
<svg style="left:971px;top:186px;" width="9" height="10" viewBox="0 0 9 10"><path d="M1 3 H8 L7.3 9.5 H1.7 Z" fill="#666"/><path d="M0.3 2 H8.7 M3 0.7 H6" stroke="#666" stroke-width="1.1"/></svg>
<div class="a" style="left:831px;top:198px;width:169px;height:2px;background:#404040;"></div>
<div class="a" style="left:831px;top:200px;width:169px;height:19.5px;background:#454545;"></div>
<div class="a" style="left:831px;top:200px;width:30.5px;height:20px;background:#535353;"></div>
<div class="a" style="left:831px;top:219.5px;width:169px;height:1px;background:#484848;"></div>
<div class="a" style="left:831px;top:200px;width:30.5px;height:1px;background:#535353;"></div>
<div class="t" style="left:838.5px;top:204.5px;color:#f0f0f0;font-size:9px">图层</div>
<div class="t" style="left:869px;top:204.5px;color:#b4b4b4;font-size:9px">画板</div>
<div class="t" style="left:900px;top:204.5px;color:#b4b4b4;font-size:9px">外观</div>
<svg style="left:988px;top:207px;" width="7" height="6" viewBox="0 0 7 6"><path d="M0 0.6 H7 M0 3 H7 M0 5.4 H7" stroke="#bdbdbd" stroke-width="1.1"/></svg>
<div class="a" style="left:833px;top:240px;width:165px;height:1px;background:#4a4a4a;"></div>
<div class="a" style="left:833px;top:255px;width:165px;height:1px;background:#4a4a4a;"></div>
<div class="a" style="left:833px;top:270px;width:165px;height:1px;background:#4a4a4a;"></div>
<div class="a" style="left:833px;top:285px;width:165px;height:1px;background:#4a4a4a;"></div>
<div class="a" style="left:833px;top:300px;width:165px;height:1px;background:#4a4a4a;"></div>
<div class="a" style="left:833px;top:317px;width:165px;height:1px;background:#4a4a4a;"></div>
<div class="a" style="left:866px;top:225px;width:4.5px;height:75px;background:#d0525c;"></div>
<div class="a" style="left:874.6px;top:225px;width:1px;height:75px;background:#8e4a52;"></div>
<div class="a" style="left:866px;top:300px;width:4.5px;height:17px;background:#4a5cb8;"></div>
<svg style="left:837px;top:229.0px;" width="10" height="7" viewBox="0 0 10 7"><path d="M0.3 3.5 Q5 -1.2 9.7 3.5 Q5 8.2 0.3 3.5 Z" fill="#d4d4d4"/><circle cx="5" cy="3.5" r="1.7" fill="#555"/></svg>
<svg style="left:837px;top:244.0px;" width="10" height="7" viewBox="0 0 10 7"><path d="M0.3 3.5 Q5 -1.2 9.7 3.5 Q5 8.2 0.3 3.5 Z" fill="#d4d4d4"/><circle cx="5" cy="3.5" r="1.7" fill="#555"/></svg>
<svg style="left:837px;top:259.0px;" width="10" height="7" viewBox="0 0 10 7"><path d="M0.3 3.5 Q5 -1.2 9.7 3.5 Q5 8.2 0.3 3.5 Z" fill="#d4d4d4"/><circle cx="5" cy="3.5" r="1.7" fill="#555"/></svg>
<svg style="left:837px;top:274.0px;" width="10" height="7" viewBox="0 0 10 7"><path d="M0.3 3.5 Q5 -1.2 9.7 3.5 Q5 8.2 0.3 3.5 Z" fill="#d4d4d4"/><circle cx="5" cy="3.5" r="1.7" fill="#555"/></svg>
<svg style="left:837px;top:289.0px;" width="10" height="7" viewBox="0 0 10 7"><path d="M0.3 3.5 Q5 -1.2 9.7 3.5 Q5 8.2 0.3 3.5 Z" fill="#d4d4d4"/><circle cx="5" cy="3.5" r="1.7" fill="#555"/></svg>
<svg style="left:874.5px;top:230px;" width="7" height="5" viewBox="0 0 7 5"><path d="M0.5 0.8 L3.5 3.8 L6.5 0.8" fill="none" stroke="#e0e0e0" stroke-width="1.4"/></svg>
<div class="a" style="left:889px;top:226.5px;width:12px;height:12px;background:#ffffff;border:0.5px solid #222"></div>
<svg style="left:890px;top:228.5px;" width="10" height="8" viewBox="0 0 10 8"><ellipse cx="5" cy="4" rx="4.6" ry="3.3" fill="#39b54a"/></svg>
<svg style="left:890px;top:228.5px;" width="10" height="8" viewBox="0 0 10 8"><ellipse cx="5" cy="3.2" rx="4.2" ry="2.8" fill="#29abe2"/><ellipse cx="5" cy="4.6" rx="4.4" ry="2.6" fill="#39b54a"/></svg>
<div class="t" style="left:905.5px;top:227px;color:#e4e4e4;font-size:9px">图层 2</div>
<svg style="left:971.5px;top:227.5px;" width="10" height="10" viewBox="0 0 10 10"><circle cx="5" cy="5" r="3.4" fill="none" stroke="#b4b4b4" stroke-width="2.1"/></svg>
<div class="a" style="left:983.7px;top:228.8px;width:7px;height:7px;background:#d23a4a;border:1.2px solid #7a1a22"></div>
<svg style="left:991px;top:226px;" width="6" height="6" viewBox="0 0 6 6"><path d="M0 0 H6 V6 Z" fill="#d8d8d8"/></svg>
<div class="a" style="left:904.5px;top:241.5px;width:12px;height:12px;background:#ffffff;border:0.5px solid #222"></div>
<svg style="left:905.5px;top:243.5px;" width="10" height="8" viewBox="0 0 10 8"><ellipse cx="5" cy="4" rx="4.6" ry="3.3" fill="#39b54a"/></svg>
<div class="t" style="left:920.5px;top:242.5px;color:#c8c8c8;font-size:9px;letter-spacing:0.3px">. . .</div>
<svg style="left:971.5px;top:242.5px;" width="10" height="10" viewBox="0 0 10 10"><circle cx="5" cy="5" r="3.4" fill="none" stroke="#b4b4b4" stroke-width="2.1"/></svg>
<div class="a" style="left:983.7px;top:243.8px;width:7px;height:7px;background:#d23a4a;border:1.2px solid #7a1a22"></div>
<div class="a" style="left:904.5px;top:256.5px;width:12px;height:12px;background:#ffffff;border:0.5px solid #222"></div>
<svg style="left:905.5px;top:258.5px;" width="10" height="8" viewBox="0 0 10 8"><ellipse cx="5" cy="4" rx="4.6" ry="3.3" fill="#ff00ff"/></svg>
<div class="t" style="left:920.5px;top:257.5px;color:#c8c8c8;font-size:9px;letter-spacing:0.3px">. . .</div>
<svg style="left:971.5px;top:257.5px;" width="10" height="10" viewBox="0 0 10 10"><circle cx="5" cy="5" r="3.4" fill="none" stroke="#b4b4b4" stroke-width="2.1"/></svg>
<div class="a" style="left:983.7px;top:258.8px;width:7px;height:7px;background:#d23a4a;border:1.2px solid #7a1a22"></div>
<div class="a" style="left:904.5px;top:271.5px;width:12px;height:12px;background:#ffffff;border:0.5px solid #222"></div>
<svg style="left:905.5px;top:273.5px;" width="10" height="8" viewBox="0 0 10 8"><ellipse cx="5" cy="4" rx="4.6" ry="3.3" fill="#29abe2"/></svg>
<div class="t" style="left:920.5px;top:272.5px;color:#c8c8c8;font-size:9px;letter-spacing:0.3px">. . .</div>
<svg style="left:971.5px;top:272.5px;" width="10" height="10" viewBox="0 0 10 10"><circle cx="5" cy="5" r="3.4" fill="none" stroke="#b4b4b4" stroke-width="2.1"/></svg>
<div class="a" style="left:983.7px;top:273.8px;width:7px;height:7px;background:#d23a4a;border:1.2px solid #7a1a22"></div>
<div class="a" style="left:904.5px;top:286.5px;width:12px;height:12px;background:#ffffff;border:0.5px solid #222"></div>
<svg style="left:905.5px;top:288.5px;" width="10" height="8" viewBox="0 0 10 8"><ellipse cx="5" cy="4" rx="4.6" ry="3.3" fill="#a974a9"/></svg>
<div class="t" style="left:920.5px;top:287.5px;color:#c8c8c8;font-size:9px;letter-spacing:0.3px">. . .</div>
<svg style="left:971.5px;top:287.5px;" width="10" height="10" viewBox="0 0 10 10"><circle cx="5" cy="5" r="3.4" fill="none" stroke="#b4b4b4" stroke-width="2.1"/></svg>
<svg style="left:891px;top:289.5px;" width="5" height="7" viewBox="0 0 5 7"><path d="M0.8 0.5 L3.8 3.5 L0.8 6.5" fill="none" stroke="#e0e0e0" stroke-width="1.4"/></svg>
<svg style="left:854px;top:304px;" width="8" height="9" viewBox="0 0 8 9"><rect x="0.5" y="4" width="7" height="5" fill="#c8c8c8"/><path d="M2 4 V2.5 Q2 0.8 4 0.8 Q6 0.8 6 2.5 V4" fill="none" stroke="#c8c8c8" stroke-width="1.2"/></svg>
<svg style="left:875px;top:305.5px;" width="5" height="7" viewBox="0 0 5 7"><path d="M0.8 0.5 L3.8 3.5 L0.8 6.5" fill="none" stroke="#e0e0e0" stroke-width="1.4"/></svg>
<div class="a" style="left:889px;top:303.5px;width:12px;height:11px;background:#ffffff;border:0.5px solid #222"></div>
<div class="a" style="left:890.5px;top:307px;width:3.5px;height:3px;background:#4a7ba8;"></div>
<div class="a" style="left:895.5px;top:307px;width:4px;height:3px;background:#5a8ab0;"></div>
<div class="t" style="left:905.5px;top:303px;color:#e4e4e4;font-size:9px">图层 1</div>
<svg style="left:971.5px;top:304px;" width="10" height="10" viewBox="0 0 10 10"><circle cx="5" cy="5" r="3.4" fill="none" stroke="#b4b4b4" stroke-width="2.1"/></svg>
<div class="a" style="left:867px;top:370px;width:3.5px;height:14px;background:#566cc0;"></div>
<svg style="left:856.3px;top:375.5px;" width="5" height="5" viewBox="0 0 5 5"><rect x="0" y="0" width="5" height="5" fill="#d0d0d0"/><rect x="1.5" y="1.5" width="2" height="2" fill="#555"/></svg>
<svg style="left:875px;top:374.5px;" width="5" height="7" viewBox="0 0 5 7"><path d="M0.8 0.5 L3.8 3.5 L0.8 6.5" fill="none" stroke="#e0e0e0" stroke-width="1.4"/></svg>
<div class="a" style="left:889px;top:372.5px;width:12px;height:11px;background:#ffffff;border:0.5px solid #222"></div>
<div class="a" style="left:890.5px;top:376px;width:3.5px;height:3px;background:#4a7ba8;"></div>
<div class="a" style="left:895.5px;top:376px;width:4px;height:3px;background:#5a8ab0;"></div>
<div class="t" style="left:905.5px;top:372px;color:#e4e4e4;font-size:9px">图层 1</div>
<div class="a" style="left:833px;top:386.5px;width:165px;height:1px;background:#4c4c4c;"></div>
<div class="a" style="left:867px;top:436px;width:3.5px;height:14px;background:#566cc0;"></div>
<svg style="left:856.3px;top:441.5px;" width="5" height="5" viewBox="0 0 5 5"><rect x="0" y="0" width="5" height="5" fill="#d0d0d0"/><rect x="1.5" y="1.5" width="2" height="2" fill="#555"/></svg>
<svg style="left:875px;top:440.5px;" width="5" height="7" viewBox="0 0 5 7"><path d="M0.8 0.5 L3.8 3.5 L0.8 6.5" fill="none" stroke="#e0e0e0" stroke-width="1.4"/></svg>
<div class="a" style="left:889px;top:438.5px;width:12px;height:11px;background:#ffffff;border:0.5px solid #222"></div>
<div class="a" style="left:890.5px;top:442px;width:3.5px;height:3px;background:#4a7ba8;"></div>
<div class="a" style="left:895.5px;top:442px;width:4px;height:3px;background:#5a8ab0;"></div>
<div class="t" style="left:905.5px;top:438px;color:#e4e4e4;font-size:9px">图层 1</div>
<div class="a" style="left:833px;top:452.5px;width:165px;height:1px;background:#4c4c4c;"></div>
<svg style="left:767px;top:404px;" width="20" height="14" viewBox="0 0 20 14"><path d="M1.5 12 V2 H19" fill="none" stroke="#e6e6e6" stroke-width="1.3"/><path d="M9 10 V7 H19" fill="none" stroke="#ededed" stroke-width="1.2"/></svg>
<svg style="left:768px;top:471px;" width="20" height="14" viewBox="0 0 20 14"><path d="M1.5 12 V2 H19" fill="none" stroke="#e6e6e6" stroke-width="1.3"/><path d="M9 10 V7 H19" fill="none" stroke="#ededed" stroke-width="1.2"/></svg>
</body></html>
